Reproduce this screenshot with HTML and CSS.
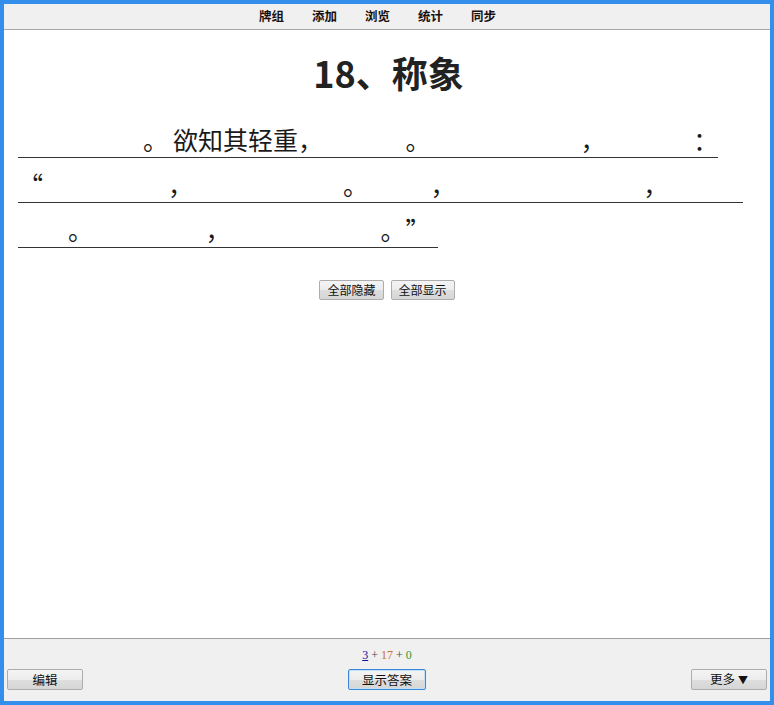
FILE: index.html
```html
<!DOCTYPE html>
<html lang="zh-CN">
  <head>
    <meta charset="UTF-8" />
    <meta name="viewport" content="width=device-width, initial-scale=1.0" />
    <title>Anki - 称象</title>
    <link rel="stylesheet" href="styles.css">
  </head>
  <body>
    <div class="window">
      <nav class="toolbar">
        <a href="#">牌组</a>
        <a href="#">添加</a>
        <a href="#">浏览</a>
        <a href="#">统计</a>
        <a href="#">同步</a>
      </nav>

      <main class="card">
        <h1 class="title">18、称象</h1>
        <p class="cloze">
          <span class="line"><span class="hide">曹冲五六岁</span>。<i class="sp2"></i>欲知其轻重，<span class="hide">访群下<i class="sp3"></i></span>。<span class="hide">咸莫能出其理</span>，<span class="hide">曹冲曰<i class="half"></i></span>：</span><br>
          <span class="line">“<span class="hide">置象大船上</span>，<span class="hide">刻其水痕所至</span>。<span class="hide">牵象<i class="half"></i></span>，<span class="hide">称物以载之至痕<i class="half"></i></span>，<span class="hide">称其物</span></span><br>
          <span class="line"><span class="hide">可知</span>。<span class="hide">象重几何<i class="half"></i></span>，<span class="hide">则校可知之矣</span>。”<i class="sp3"></i></span>
        </p>
        <div class="actions">
          <button>全部隐藏</button>
          <button>全部显示</button>
        </div>
      </main>

      <footer class="bottombar">
        <div class="counts">
          <u class="new">3</u> + <span class="learn">17</span> + <span class="due">0</span>
        </div>
        <div class="bottom-buttons">
          <button class="edit">编辑</button>
          <button class="answer">显示答案</button>
          <button class="more">更多 <small>▼</small></button>
        </div>
      </footer>
    </div>
  </body>
</html>
```

FILE: styles.css
```css
/* Resets */
html,
body {
  margin: 0;
  padding: 0;
}
body {
  font-family: "Noto Sans CJK SC", "Noto Sans", sans-serif;
  color: #1c1c1c;
  text-spacing-trim: space-all;
}

/* Window */
.window {
  box-sizing: border-box;
  width: 774px;
  height: 705px;
  border: 4px solid #338feb;
  display: flex;
  flex-direction: column;
  background: #f0f0f0;
}

/* Top toolbar */
.toolbar {
  box-sizing: border-box;
  height: 26px;
  border-bottom: 1px solid #a8a8a8;
  display: flex;
  justify-content: center;
  align-items: center;
  gap: 28px;
  padding-right: 19px;
  padding-bottom: 2px;
}
.toolbar a {
  font-size: 12.5px;
  font-weight: bold;
  color: #1a0f0f;
  text-decoration: none;
  line-height: 16px;
}

/* Card */
.card {
  flex: 1;
  background: #fff;
  padding: 0 14px;
  overflow: hidden;
}
.title {
  margin: 17px 0 20px;
  padding-left: 3px;
  font-size: 36px;
  line-height: 50px;
  font-weight: bold;
  text-align: center;
  color: #222;
}
.cloze {
  margin: 0;
  font-size: 25px;
  line-height: 45px;
  color: #1a1a1a;
  white-space: nowrap;
}
.cloze .line {
  border-bottom: 1px solid #333;
}
.cloze .hide {
  color: transparent;
}
.cloze i {
  display: inline-block;
}
.cloze .sp2 {
  width: 0.2em;
}
.cloze .sp3 {
  width: 0.3em;
}
.cloze .half {
  width: 0.5em;
}

/* Buttons */
button {
  font-family: "Noto Sans CJK SC", sans-serif;
  font-size: 12px;
  color: #111;
  height: 20px;
  padding: 0 7px;
  line-height: 18px;
  border: 1px solid #adadad;
  border-radius: 2px;
  background: linear-gradient(#f4f4f4, #ececec 50%, #dedede 51%, #d6d6d6);
}
.actions {
  margin-top: 28px;
  display: flex;
  justify-content: center;
  gap: 7px;
}

/* Bottom bar */
.bottombar {
  border-top: 1px solid #a0a0a0;
  padding: 7px 3px 11px;
}
.counts {
  height: 18px;
  line-height: 18px;
  text-align: center;
  font-family: "Liberation Serif", serif;
  font-size: 12px;
  color: #444;
}
.counts .new {
  color: #1010a0;
}
.counts .learn {
  color: #c8701a;
}
.counts .due {
  color: #2f9a2f;
}
.bottom-buttons {
  margin-top: 5px;
  display: grid;
  grid-template-columns: 1fr auto 1fr;
  align-items: center;
}
.bottom-buttons button {
  height: 21px;
  width: 76px;
  font-size: 12.5px;
}
.bottom-buttons .edit {
  justify-self: start;
}
.bottom-buttons .answer {
  width: 78px;
  border-color: #3c87d3;
  box-shadow: inset 0 0 0 1px #bfe0f7;
}
.bottom-buttons .more {
  justify-self: end;
}
.bottom-buttons .more small {
  font-size: 10px;
}
```
